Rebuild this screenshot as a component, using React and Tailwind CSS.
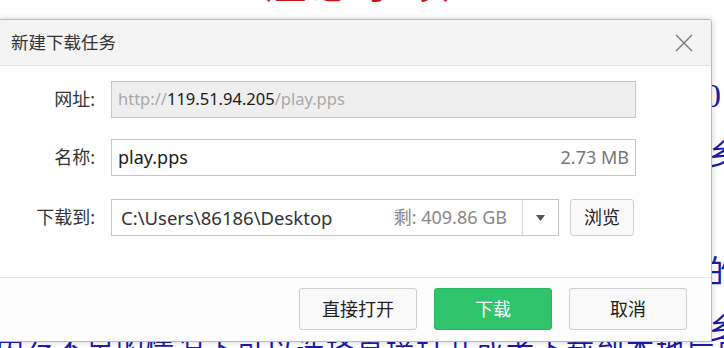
import React from "react";

const cjk = { fontFamily: '"Noto Sans", "Noto Sans CJK SC", sans-serif' };
const serif = { fontFamily: '"Liberation Serif", "Noto Sans CJK SC", serif' };

export default function App() {
  return (
    <div className="relative w-[724px] h-[348px] overflow-hidden bg-white" style={cjk}>
      {/* background page content (mostly covered by the dialog) */}
      <div
        className="absolute left-[262px] top-[-41px] text-[44px] font-bold text-[#c8161d] tracking-[4px] leading-[44px]"
        style={cjk}
      >
        注意事项：
      </div>
      <div className="absolute left-[704px] top-[76px] text-[34px] leading-[40px] text-[#1c1ca6]" style={serif}>
        0
      </div>
      <div className="absolute left-[708px] top-[138px] text-[30px] leading-[34px] text-[#1c1ca6]" style={serif}>
        乡
      </div>
      <div className="absolute left-[706px] top-[254px] text-[34px] leading-[40px] text-[#1c1ca6]" style={serif}>
        的
      </div>
      <div className="absolute left-[708px] top-[312px] text-[30px] leading-[34px] text-[#1c1ca6]" style={serif}>
        乡
      </div>
      <div
        className="absolute left-[-4px] top-[334px] whitespace-nowrap text-[28px] leading-[34px] text-[#1c1ca6] tracking-[2px]"
        style={serif}
      >
        内存不足的情况下可以选择直接打开或者下载到本地后再打开文件
      </div>

      {/* dialog */}
      <div className="absolute left-[-2px] top-[19px] w-[714px] h-[323px] flex flex-col bg-white border border-[#b9b9b9] rounded-[3px] shadow-[0_0_6px_rgba(0,0,0,0.18)] overflow-hidden">
        {/* title bar */}
        <div className="h-[46px] shrink-0 flex items-center justify-between bg-[#f4f4f4] border-b border-[#e2e2e2] pl-[12px] pr-[17px]">
          <span className="text-[17.5px] text-[#333333]">新建下载任务</span>
          <svg width="20" height="20" viewBox="0 0 20 20" className="mt-[1px]">
            <path d="M2 2 L18 18 M18 2 L2 18" stroke="#7a7a7a" strokeWidth="1.4" fill="none" />
          </svg>
        </div>

        {/* body */}
        <div className="flex-1 flex flex-col pt-[15px] text-[18px] text-[#222222]">
          <div className="flex items-center h-[37px]">
            <div className="w-[96px] text-right text-[#333333]">网址:</div>
            <div className="ml-[16px] w-[525px] h-full flex items-center bg-[#efefef] border border-[#c6c6c6] pl-[6px] text-[16.5px]">
              <span className="text-[#a8a8a8]">http://</span>
              <span className="text-[#1a1a1a]">119.51.94.205</span>
              <span className="text-[#a8a8a8]">/play.pps</span>
            </div>
          </div>

          <div className="flex items-center h-[37px] mt-[21px]">
            <div className="w-[96px] text-right text-[#333333]">名称:</div>
            <div className="ml-[16px] w-[525px] h-full flex items-center justify-between bg-white border border-[#c6c6c6] pl-[6px] pr-[6px]">
              <span className="text-[#1a1a1a]">play.pps</span>
              <span className="text-[#777777]">2.73 MB</span>
            </div>
          </div>

          <div className="flex items-center h-[37px] mt-[23px]">
            <div className="w-[96px] text-right text-[#333333]">下载到:</div>
            <div className="ml-[16px] w-[448px] h-full flex items-stretch bg-white border border-[#c6c6c6]">
              <div className="flex-1 flex items-center justify-between pl-[9px] pr-[15px]">
                <span className="text-[#333333] text-[18.5px]">C:\Users\86186\Desktop</span>
                <span className="text-[#888888]">剩: 409.86 GB</span>
              </div>
              <div className="w-[36px] flex items-center justify-center border-l border-[#d6d6d6]">
                <svg width="9" height="6" viewBox="0 0 9 6">
                  <path d="M0 0 H9 L4.5 6 Z" fill="#555555" />
                </svg>
              </div>
            </div>
            <button className="ml-[11px] w-[64px] h-[37px] flex items-center justify-center bg-[#f9f9f9] border border-[#cfcfcf] rounded-[3px] text-[#222222] text-[18px]">
              浏览
            </button>
          </div>
        </div>

        {/* footer */}
        <div className="h-[64px] shrink-0 border-t border-[#e6e6e6] bg-[#fdfdfd] flex items-start justify-end pt-[10px] pr-[24px] gap-[17px] text-[18px]">
          <button className="w-[118px] h-[42px] bg-[#f9f9f9] border border-[#cfcfcf] rounded-[3px] text-[#222222]">
            直接打开
          </button>
          <button className="w-[118px] h-[42px] bg-[#2fc46b] border border-[#29b561] rounded-[3px] text-white">
            下载
          </button>
          <button className="w-[118px] h-[42px] bg-[#f9f9f9] border border-[#cfcfcf] rounded-[3px] text-[#222222]">
            取消
          </button>
        </div>
      </div>
    </div>
  );
}
